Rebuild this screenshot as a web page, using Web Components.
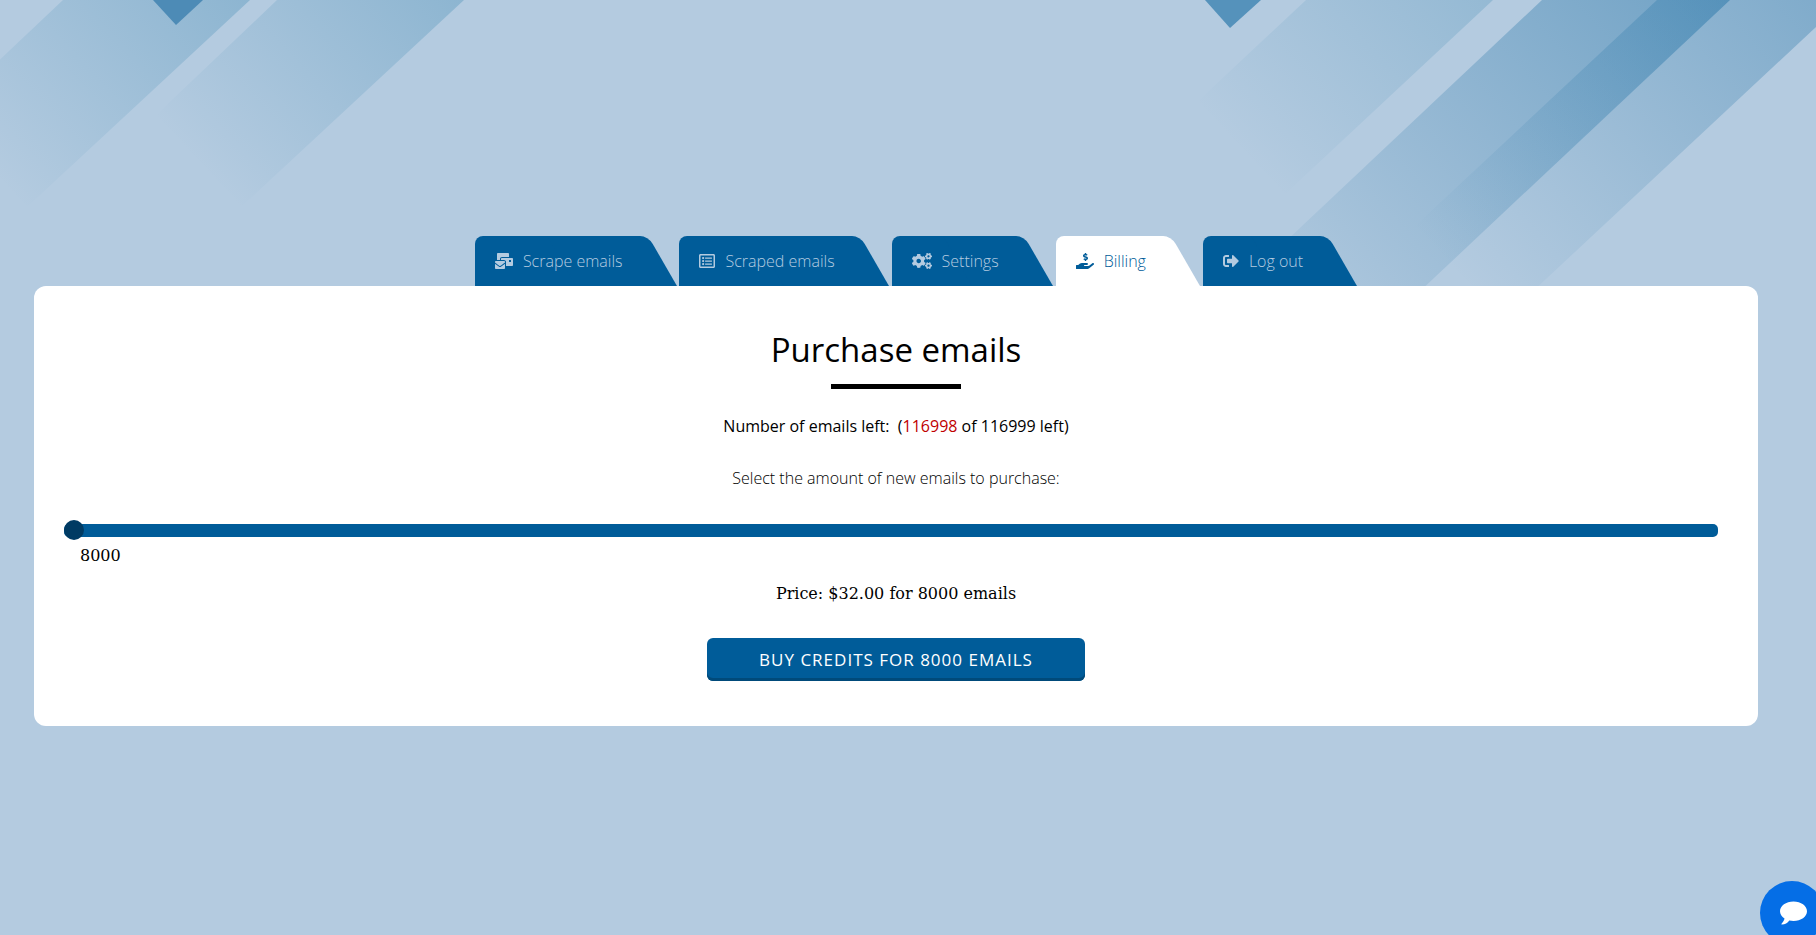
<!DOCTYPE html>
<html lang="en">
<head>
  <meta charset="utf-8">
  <meta name="viewport" content="width=device-width, initial-scale=1">
  <title>Billing</title>
  <style>
    body {
      margin: 0;
      min-height: 100vh;
      background: #b4cbe0;
      overflow: hidden auto;
      font-family: 'Open Sans', sans-serif;
      font-size: 16px;
      line-height: 24px;
      --primary: #005c99;
      --primary-dark: #004a7a;
      --muted: #b4cbe0;
    }
  </style>
</head>
<body>
<dashboard-shell>
  <tab-bar slot="tabs">
    <tab-link icon="mail">Scrape emails</tab-link>
    <tab-link icon="list">Scraped emails</tab-link>
    <tab-link icon="cogs">Settings</tab-link>
    <tab-link icon="hand" active>Billing</tab-link>
    <tab-link icon="exit">Log out</tab-link>
  </tab-bar>
  <billing-view left="116998" total="116999"></billing-view>
</dashboard-shell>
<chat-button></chat-button>

<script>
const icons = {
  mail: ['0 0 576 512', '<path d="M160 448c-25.6 0-51.2-22.4-64-32-64-44.8-83.2-60.8-96-70.4V480c0 17.67 14.33 32 32 32h256c17.67 0 32-14.33 32-32V345.6c-12.8 9.6-32 25.6-96 70.4-12.8 9.6-38.4 32-64 32zm128-192H32c-17.67 0-32 14.33-32 32v16c25.6 19.2 22.4 19.2 115.2 86.4 9.6 6.4 28.8 25.6 44.8 25.6s35.2-19.2 44.8-22.4c92.8-67.2 89.6-67.2 115.2-86.4V288c0-17.67-14.33-32-32-32zm256-96H224c-17.67 0-32 14.33-32 32v32h96c33.21 0 60.59 25.42 63.71 57.82l.29-.22V416h192c17.67 0 32-14.33 32-32V192c0-17.67-14.33-32-32-32zm-32 128h-64v-64h64v64zm-352-96c0-35.29 28.71-64 64-64h224V32c0-17.67-14.33-32-32-32H96C78.33 0 64 14.33 64 32v192h96v-32z"/>'],
  list: ['0 0 512 512', '<path d="M464 32H48C21.49 32 0 53.49 0 80v352c0 26.51 21.49 48 48 48h416c26.51 0 48-21.49 48-48V80c0-26.51-21.49-48-48-48zm-6 400H54a6 6 0 0 1-6-6V86a6 6 0 0 1 6-6h404a6 6 0 0 1 6 6v340a6 6 0 0 1-6 6z"/><rect x="192" y="140" width="224" height="40" rx="12"/><rect x="192" y="236" width="224" height="40" rx="12"/><rect x="192" y="332" width="224" height="40" rx="12"/><circle cx="132" cy="160" r="36"/><circle cx="132" cy="256" r="36"/><circle cx="132" cy="352" r="36"/>'],
  cogs: ['0 0 640 512', '<path id="small" d="M512.1 191l-8.2 14.3c-3 5.3-9.4 7.5-15.1 5.4-11.8-4.4-22.6-10.7-32.1-18.6-4.6-3.8-5.8-10.5-2.8-15.7l8.2-14.3c-6.9-8-12.3-17.3-15.9-27.4h-16.5c-6 0-11.2-4.3-12.2-10.3-2-12-2.1-24.6 0-37.1 1-6 6.2-10.4 12.2-10.4h16.5c3.6-10.1 9-19.4 15.9-27.4l-8.2-14.3c-3-5.2-1.9-11.9 2.8-15.7 9.5-7.9 20.4-14.2 32.1-18.6 5.7-2.1 12.1.1 15.1 5.4l8.2 14.3c10.5-1.9 21.2-1.9 31.7 0L552 6.3c3-5.3 9.4-7.5 15.1-5.4 11.8 4.4 22.6 10.7 32.1 18.6 4.6 3.8 5.8 10.5 2.8 15.7l-8.2 14.3c6.9 8 12.3 17.3 15.9 27.4h16.5c6 0 11.2 4.3 12.2 10.3 2 12 2.1 24.6 0 37.1-1 6-6.2 10.4-12.2 10.4h-16.5c-3.6 10.1-9 19.4-15.9 27.4l8.2 14.3c3 5.2 1.9 11.9-2.8 15.7-9.5 7.9-20.4 14.2-32.1 18.6-5.7 2.1-12.1-.1-15.1-5.4l-8.2-14.3c-10.4 1.9-21.2 1.9-31.7 0zm-10.5-58.8c38.5 29.6 82.4-14.3 52.8-52.8-38.5-29.7-82.4 14.3-52.8 52.8z"/><use href="#small" y="299"/><path d="M386.3 286.1l33.7 16.8c10.1 5.8 14.5 18.1 10.5 29.1-8.9 24.2-26.4 46.4-42.6 65.8-7.4 8.9-20.2 11.1-30.3 5.3l-29.1-16.8c-16 13.7-34.6 24.6-54.9 31.7v33.6c0 11.6-8.3 21.6-19.7 23.6-24.6 4.2-50.4 4.4-75.9 0-11.5-2-20-11.9-20-23.6V418c-20.3-7.2-38.9-18-54.9-31.7L74 403c-10 5.8-22.9 3.6-30.3-5.3-16.2-19.4-33.3-41.6-42.2-65.7-4-10.9.4-23.2 10.5-29.1l33.3-16.8c-3.9-20.9-3.9-42.4 0-63.4L12 205.8c-10.1-5.8-14.6-18.1-10.5-29 8.9-24.2 26-46.4 42.2-65.8 7.4-8.9 20.2-11.1 30.3-5.3l29.1 16.8c16-13.7 34.6-24.6 54.9-31.7V57.1c0-11.5 8.2-21.5 19.6-23.5 24.6-4.2 50.5-4.4 76-.1 11.5 2 20 11.9 20 23.6v33.6c20.3 7.2 38.9 18 54.9 31.7l29.1-16.8c10-5.8 22.9-3.6 30.3 5.3 16.2 19.4 33.2 41.6 42.1 65.8 4 10.9.1 23.2-10 29.1l-33.7 16.8c3.9 21 3.9 42.5 0 63.5zm-117.6 21.1c59.2-77-28.7-164.9-105.7-105.7-59.2 77 28.7 164.9 105.7 105.7z"/>'],
  hand: ['0 0 576 512', '<path d="M271.06 144.3l54.27 14.3a8.59 8.59 0 0 1 6.63 8.1c0 4.6-4.09 8.4-9.12 8.4h-35.6a30 30 0 0 1-11.19-2.2c-5.24-2.2-11.28-1.7-15.3 2l-19 17.5a11.68 11.68 0 0 0-2.25 2.66 11.42 11.42 0 0 0 3.88 15.74 83.77 83.77 0 0 0 34.51 11.5V240c0 8.8 7.83 16 17.37 16h17.37c9.55 0 17.38-7.2 17.38-16v-17.6c32.93-3.6 57.84-31 53.5-63-3.15-23-22.46-41.3-46.56-47.7L282.68 97.4a8.59 8.59 0 0 1-6.63-8.1c0-4.6 4.09-8.4 9.12-8.4h35.6A30 30 0 0 1 332 83.1c5.23 2.2 11.28 1.7 15.3-2l19-17.5a11.31 11.31 0 0 0 2.17-2.6 11.43 11.43 0 0 0-3.84-15.78 83.82 83.82 0 0 0-34.52-11.5V16c0-8.8-7.82-16-17.37-16h-17.37C285.82 0 278 7.2 278 16v17.6c-32.89 3.6-57.85 31-53.51 63 3.14 23 22.51 41.3 46.57 47.7zM565.27 328.1c-11.8-10.7-30.2-10-42.6 0L430.27 402a63.64 63.64 0 0 1-40 14H272a16 16 0 0 1 0-32h78.29c15.9 0 30.71-10.9 33.25-26.6a31.2 31.2 0 0 0 .46-5.46A32 32 0 0 0 352 320H192a117.66 117.66 0 0 0-74.1 26.29L71.4 384H16a16 16 0 0 0-16 16v96a16 16 0 0 0 16 16h356.77a64 64 0 0 0 40-14L564 377a32 32 0 0 0 1.27-48.9z"/>'],
  exit: ['0 0 512 512', '<path d="M497 273L329 441c-15 15-41 4.5-41-17v-96H152c-13.3 0-24-10.7-24-24v-96c0-13.3 10.7-24 24-24h136V88c0-21.4 25.9-32 41-17l168 168c9.3 9.4 9.3 24.6 0 34zM192 436v-40c0-6.6-5.4-12-12-12H96c-17.7 0-32-14.3-32-32V160c0-17.7 14.3-32 32-32h84c6.6 0 12-5.4 12-12V76c0-6.6-5.4-12-12-12H96c-53 0-96 43-96 96v192c0 53 43 96 96 96h84c6.6 0 12-5.4 12-12z"/>']
}

customElements.define('dashboard-shell', class DashboardShell extends HTMLElement {
  constructor() {
    super()

    this.attachShadow({mode: 'open'})
    this.shadowRoot.innerHTML = this.template
  }

  get template() {
    return `
<style>
  :host {
    display: block;
    position: relative;
    padding: 236px 58px 48px 34px;
  }

  .stripes {
    position: absolute;
    inset: 0 0 auto 0;
    width: 100%;
    z-index: -1;
  }

  main {
    background: #fff;
    border-radius: 12px;
  }
</style>

<svg class="stripes" viewBox="0 0 1816 340" aria-hidden="true">
  <defs>
    <linearGradient id="a" gradientUnits="userSpaceOnUse" x1="-18" y1="163" x2="392" y2="-219"><stop stop-color="#0a6c9e" stop-opacity="0"/><stop offset="1" stop-color="#0a6c9e" stop-opacity=".42"/></linearGradient>
    <linearGradient id="b" gradientUnits="userSpaceOnUse" x1="197" y1="163" x2="607" y2="-219"><stop stop-color="#0a6c9e" stop-opacity="0"/><stop offset="1" stop-color="#0a6c9e" stop-opacity=".42"/></linearGradient>
    <linearGradient id="c" gradientUnits="userSpaceOnUse" x1="1239" y1="150" x2="1649" y2="-232"><stop stop-color="#0a6c9e" stop-opacity="0"/><stop offset="1" stop-color="#0a6c9e" stop-opacity=".36"/></linearGradient>
    <linearGradient id="d" gradientUnits="userSpaceOnUse" x1="1256" y1="319" x2="1666" y2="-63"><stop stop-color="#0a649c" stop-opacity="0"/><stop offset="1" stop-color="#0a649c" stop-opacity=".39"/></linearGradient>
    <linearGradient id="e" gradientUnits="userSpaceOnUse" x1="1457" y1="275" x2="1867" y2="-107"><stop stop-color="#0a649c" stop-opacity="0"/><stop offset="1" stop-color="#0a649c" stop-opacity=".38"/></linearGradient>
  </defs>
  <path fill="url(#a)" d="M63 0H250L26 208-62 118z"/>
  <path fill="url(#b)" d="M277 0H464L240 208 153 118z"/>
  <path fill="url(#c)" d="M1306 0H1493L1283 196 1195 104z"/>
  <path fill="url(#d)" d="M1542 0H1730L1368 340H1181z"/>
  <path fill="url(#e)" d="M1657 0H1816V27L1500 322 1413 228z"/>
  <path fill="#4d8bb6" d="M153 0h50l-27 25z"/>
  <path fill="#5592bb" d="M1205 0h56l-31 28z"/>
</svg>

<slot name="tabs"></slot>
<main><slot></slot></main>
    `
  }
})

customElements.define('tab-bar', class TabBar extends HTMLElement {
  constructor() {
    super()

    this.attachShadow({mode: 'open'})
    this.shadowRoot.innerHTML = this.template
  }

  get template() {
    return `
<style>
  :host {
    display: block;
  }

  nav {
    display: flex;
    justify-content: center;
    gap: 3px;
    padding-left: 40px;
  }
</style>

<nav aria-label="Dashboard"><slot></slot></nav>
    `
  }
})

customElements.define('tab-link', class TabLink extends HTMLElement {
  constructor() {
    super()

    this.attachShadow({mode: 'open'})
  }

  connectedCallback() {
    this.shadowRoot.innerHTML = this.template
  }

  get template() {
    const [viewBox, shape] = icons[this.getAttribute('icon')]
    return `
<style>
  :host {
    display: block;
    --tab: var(--primary);
    color: var(--muted);
    font-weight: 300;
  }

  :host([active]) {
    --tab: #fff;
    color: var(--primary);
  }

  a {
    display: flex;
    align-items: center;
    gap: 10px;
    height: 50px;
    padding: 0 54px 0 20px;
    position: relative;
    z-index: 0;
    color: inherit;
    text-decoration: none;
    white-space: nowrap;
  }

  a::before, a::after {
    content: '';
    position: absolute;
    z-index: -1;
    inset: 0 40px 0 0;
    background: var(--tab);
    border-radius: 8px 0 0 0;
  }

  /* slanted right edge */
  a::after {
    inset: 0 0 0 50%;
    border-radius: 0 8px 0 0;
    transform: skewX(30deg);
    transform-origin: 100% 100%;
  }

  svg {
    height: 16px;
    fill: currentColor;
  }
</style>

<a href="#"><svg viewBox="${viewBox}" aria-hidden="true">${shape}</svg><slot></slot></a>
    `
  }
})

customElements.define('billing-view', class BillingView extends HTMLElement {
  constructor() {
    super()

    this.attachShadow({mode: 'open'})
  }

  connectedCallback() {
    this.shadowRoot.innerHTML = this.template
    this.shadowRoot.querySelector('input').addEventListener('input', ({target}) => this.update(Number(target.value)))
    this.update(8000)
  }

  update(amount) {
    this.shadowRoot.querySelector('output').textContent = amount
    this.shadowRoot.querySelector('.price').textContent = `Price: $${(amount * 0.004).toFixed(2)} for ${amount} emails`
    this.shadowRoot.querySelector('button').textContent = `BUY CREDITS FOR ${amount} EMAILS`
  }

  get template() {
    return `
<style>
  :host {
    display: flex;
    flex-direction: column;
    align-items: center;
    padding: 44px 30px 45px;
    color: #000;
  }

  h1 {
    margin: 0;
    font-size: 33px;
    font-weight: 400;
    line-height: 40px;
  }

  hr {
    width: 130px;
    height: 5px;
    margin: 14px 0 25px;
    border: 0;
    background: #000;
  }

  p {
    margin: 0;
  }

  .left span {
    color: #c00000;
  }

  label {
    margin: 28px 0 30px;
    font-weight: 300;
  }

  .range {
    align-self: stretch;
    margin-right: 10px;
  }

  input {
    appearance: none;
    display: block;
    width: 100%;
    height: 20px;
    margin: 0;
    background: none;
  }

  input::-webkit-slider-runnable-track {
    height: 13px;
    border-radius: 5px;
    background: var(--primary);
  }

  input::-webkit-slider-thumb {
    appearance: none;
    width: 20px;
    height: 20px;
    margin-top: -4px;
    border-radius: 50%;
    background: #003b63;
  }

  output, .price {
    font-family: 'DejaVu Serif', serif;
  }

  output {
    display: block;
    margin: 4px 16px 14px;
  }

  button {
    margin-top: 32px;
    padding: 0 52px;
    height: 43px;
    border: 0;
    border-radius: 6px;
    background: var(--primary);
    box-shadow: inset 0 -3px var(--primary-dark);
    color: #fff;
    font-family: inherit;
    font-size: 17px;
    letter-spacing: 1px;
    cursor: pointer;
  }
</style>

<h1>Purchase emails</h1>
<hr>
<p class="left">Number of emails left: &nbsp;(<span>${this.getAttribute('left')}</span> of ${this.getAttribute('total')} left)</p>
<label for="amount">Select the amount of new emails to purchase:</label>
<div class="range">
  <input type="range" id="amount" min="8000" max="500000" step="1000" value="8000">
  <output for="amount"></output>
</div>
<p class="price"></p>
<button type="button"></button>
    `
  }
})

customElements.define('chat-button', class ChatButton extends HTMLElement {
  constructor() {
    super()

    this.attachShadow({mode: 'open'})
    this.shadowRoot.innerHTML = this.template
  }

  get template() {
    return `
<style>
  :host {
    display: block;
    position: fixed;
    right: -8px;
    bottom: -10px;
  }

  button {
    display: grid;
    place-items: center;
    width: 64px;
    height: 64px;
    padding: 0;
    border: 0;
    border-radius: 50%;
    background: #056ee6;
  }

  svg {
    width: 30px;
    height: 24px;
    fill: #fff;
  }
</style>

<button type="button" aria-label="Open chat"><svg viewBox="-2 0 30 24" aria-hidden="true"><path d="M14.500 .5C22 .5 28 4.800 28 10.300S22 20 14.500 20c-1.500 0-2.900-.2-4.200-.5C8.500 22 6 23.500 3 23.500c-.7 0-.8-.6-.3-1.100 1.500-1.600 2.500-3.100 2.800-5C2.700 15.600 1 13.100 1 10.300 1 4.800 7 .5 14.500 .5z"/></svg></button>
    `
  }
})
</script>
</body>
</html>
